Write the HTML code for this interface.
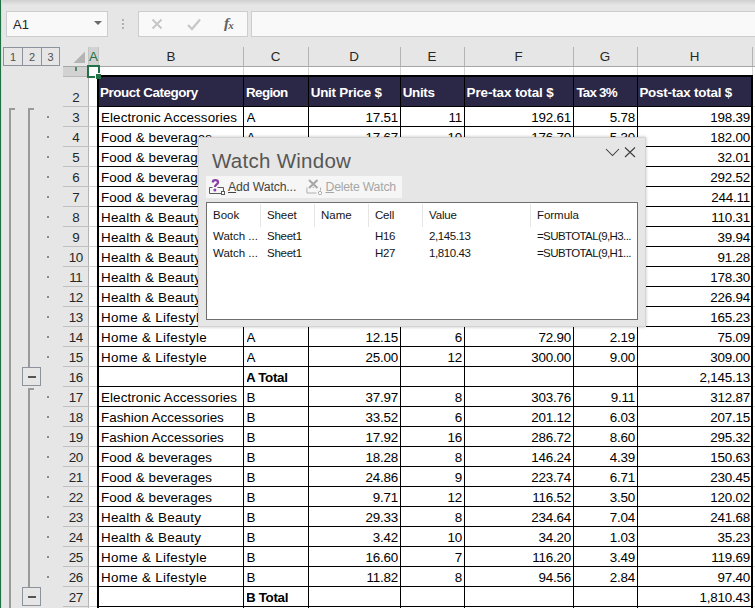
<!DOCTYPE html>
<html><head><meta charset="utf-8"><title>Watch Window</title>
<style>
*{box-sizing:border-box;margin:0;padding:0}
html,body{width:755px;height:608px;overflow:hidden;background:#e6e6e6;font-family:"Liberation Sans",sans-serif;}
body{position:relative}
.abs{position:absolute}
.t{position:absolute;white-space:nowrap;line-height:1}
.cell{position:absolute;white-space:nowrap;font-size:13.4px;line-height:20px;height:20px;color:#000;overflow:hidden;letter-spacing:0.05px;padding-top:1px}
.r{text-align:right;letter-spacing:-0.2px}
.hd{position:absolute;white-space:nowrap;font-size:13.4px;font-weight:bold;color:#fff;line-height:20px;letter-spacing:-0.4px}
.ch{position:absolute;top:47px;height:19px;line-height:19px;text-align:center;font-size:13.4px;color:#262626}
.rh{position:absolute;left:63px;width:25.5px;height:20px;line-height:20px;text-align:center;font-size:13.4px;color:#262626;letter-spacing:-0.5px;padding-top:1px}
.vl{position:absolute;background:#000;width:1px}
.hl{position:absolute;background:#000;height:1px}
.dot{position:absolute;left:47px;width:2px;height:2px;background:#8a8a8a}
.ww{font-size:12px;color:#151515;position:absolute;white-space:nowrap;line-height:14px}
</style></head><body>

<div class="abs" style="left:0;top:0;width:755px;height:5px;background:linear-gradient(#cfcfcf,#e6e6e6)"></div>
<div class="abs" style="left:6px;top:11px;width:102px;height:26px;background:#f9f9f9;border:1px solid #cdcdcd"></div>
<div class="t" style="left:13px;top:17.5px;font-size:13px;color:#262626">A1</div>
<div class="abs" style="left:94px;top:21px;width:0;height:0;border-left:4px solid transparent;border-right:4px solid transparent;border-top:4.5px solid #6a6a6a"></div>
<div class="abs" style="left:122px;top:19px;width:2px;height:2px;background:#b0b0b0"></div>
<div class="abs" style="left:122px;top:23px;width:2px;height:2px;background:#b0b0b0"></div>
<div class="abs" style="left:122px;top:27px;width:2px;height:2px;background:#b0b0b0"></div>
<div class="abs" style="left:138px;top:11px;width:110px;height:26px;background:#f9f9f9;border:1px solid #cdcdcd"></div>
<svg class="abs" style="left:150px;top:17px" width="14" height="14" viewBox="0 0 14 14"><path d="M2.5 2.5 L11.5 11.5 M11.5 2.5 L2.5 11.5" stroke="#c6c6c6" stroke-width="1.9" fill="none"/></svg>
<svg class="abs" style="left:186px;top:17px" width="16" height="14" viewBox="0 0 16 14"><path d="M2 8 L6 12 L14 2.5" stroke="#c8c8c8" stroke-width="2.3" fill="none"/></svg>
<div class="t" style="left:224px;top:15px;font-family:'Liberation Serif',serif;font-style:italic;font-weight:bold;font-size:15.5px;color:#606060">f<b style="font-size:11px;margin-left:-1px;position:relative;top:1px">x</b></div>
<div class="abs" style="left:251px;top:11px;width:510px;height:26px;background:#f9f9f9;border:1px solid #cdcdcd"></div>
<div class="abs" style="left:3px;top:47px;width:20px;height:19px;border:1px solid #8d939c;background:#e6e6e6;font-size:11px;line-height:18.5px;text-align:center;color:#505050">1</div>
<div class="abs" style="left:22px;top:47px;width:20px;height:19px;border:1px solid #8d939c;background:#e6e6e6;font-size:11px;line-height:18.5px;text-align:center;color:#505050">2</div>
<div class="abs" style="left:41px;top:47px;width:19px;height:19px;border:1px solid #8d939c;background:#e6e6e6;font-size:11px;line-height:18.5px;text-align:center;color:#505050">3</div>
<svg class="abs" style="left:73px;top:51px" width="12" height="12" viewBox="0 0 12 12"><path d="M12 0.5 L12 12 L0.5 12 Z" fill="#b4b4b4"/></svg>
<div class="abs" style="left:89px;top:67px;width:666px;height:541px;background:#fff"></div>
<div class="abs" style="left:88px;top:47px;width:11px;height:19px;background:#d2d2d2;border-left:1px solid #c4c4c4;border-right:1px solid #c4c4c4"></div>
<div class="ch" style="left:86px;width:15px;color:#217346">A</div>
<div class="ch" style="left:99px;width:144px">B</div>
<div class="ch" style="left:243px;width:65px">C</div>
<div class="ch" style="left:308px;width:92px">D</div>
<div class="ch" style="left:400px;width:64px">E</div>
<div class="ch" style="left:464px;width:109px">F</div>
<div class="ch" style="left:573px;width:64px">G</div>
<div class="ch" style="left:637px;width:115px">H</div>
<div class="abs" style="left:243px;top:47px;width:1px;height:19px;background:#b4b4b4"></div>
<div class="abs" style="left:308px;top:47px;width:1px;height:19px;background:#b4b4b4"></div>
<div class="abs" style="left:400px;top:47px;width:1px;height:19px;background:#b4b4b4"></div>
<div class="abs" style="left:464px;top:47px;width:1px;height:19px;background:#b4b4b4"></div>
<div class="abs" style="left:573px;top:47px;width:1px;height:19px;background:#b4b4b4"></div>
<div class="abs" style="left:637px;top:47px;width:1px;height:19px;background:#b4b4b4"></div>
<div class="abs" style="left:752px;top:47px;width:1px;height:19px;background:#b4b4b4"></div>
<div class="abs" style="left:63px;top:66px;width:692px;height:1px;background:#a6a6a6"></div>
<div class="abs" style="left:99px;top:67px;width:1px;height:8px;background:#d4d4d4"></div>
<div class="abs" style="left:243px;top:67px;width:1px;height:8px;background:#d4d4d4"></div>
<div class="abs" style="left:308px;top:67px;width:1px;height:8px;background:#d4d4d4"></div>
<div class="abs" style="left:400px;top:67px;width:1px;height:8px;background:#d4d4d4"></div>
<div class="abs" style="left:464px;top:67px;width:1px;height:8px;background:#d4d4d4"></div>
<div class="abs" style="left:573px;top:67px;width:1px;height:8px;background:#d4d4d4"></div>
<div class="abs" style="left:637px;top:67px;width:1px;height:8px;background:#d4d4d4"></div>
<div class="abs" style="left:752px;top:67px;width:1px;height:8px;background:#d4d4d4"></div>
<div class="abs" style="left:63px;top:67px;width:25px;height:10px;background:#d2d2d2"></div><div class="abs" style="left:75px;top:67px;width:2px;height:4px;background:#4f8a68"></div>
<div class="abs" style="left:88px;top:66px;width:1px;height:542px;background:#b4b4b4"></div>
<div class="rh" style="top:87px">2</div>
<div class="abs" style="left:63px;top:76px;width:26px;height:1px;background:#b8b8b8"></div>
<div class="abs" style="left:63px;top:106px;width:26px;height:1px;background:#c0c0c0"></div>
<div class="abs" style="left:97px;top:75px;width:656px;height:32px;background:#000"></div>
<div class="abs" style="left:99px;top:77px;width:652px;height:29px;background:#2b2747"></div>
<div class="hd" style="left:100px;top:83px;letter-spacing:-0.42px">Prouct Category</div>
<div class="hd" style="left:246px;top:83px;letter-spacing:-0.62px">Region</div>
<div class="hd" style="left:310.7px;top:83px;letter-spacing:-0.22px">Unit Price $</div>
<div class="hd" style="left:402.7px;top:83px;letter-spacing:-0.3px">Units</div>
<div class="hd" style="left:466.6px;top:83px;letter-spacing:-0.1px">Pre-tax total $</div>
<div class="hd" style="left:576.4px;top:83px;letter-spacing:-0.78px">Tax 3%</div>
<div class="hd" style="left:639.4px;top:83px;letter-spacing:-0.22px">Post-tax total $</div>
<div class="vl" style="left:243px;top:77px;height:30px"></div>
<div class="vl" style="left:308px;top:77px;height:30px"></div>
<div class="vl" style="left:400px;top:77px;height:30px"></div>
<div class="vl" style="left:464px;top:77px;height:30px"></div>
<div class="vl" style="left:573px;top:77px;height:30px"></div>
<div class="vl" style="left:637px;top:77px;height:30px"></div>
<div class="rh" style="top:107px">3</div>
<div class="abs" style="left:63px;top:126px;width:26px;height:1px;background:#c0c0c0"></div>
<div class="cell" style="left:101px;top:107px;width:140.5px;letter-spacing:0.1px">Electronic Accessories</div>
<div class="cell" style="left:246.5px;top:107px;width:61.5px;letter-spacing:0.05px">A</div>
<div class="cell r" style="left:309px;top:107px;width:89px">17.51</div>
<div class="cell r" style="left:401px;top:107px;width:61px">11</div>
<div class="cell r" style="left:465px;top:107px;width:106px">192.61</div>
<div class="cell r" style="left:574px;top:107px;width:61px">5.78</div>
<div class="cell r" style="left:638px;top:107px;width:112px">198.39</div>
<div class="hl" style="left:98px;top:126px;width:655px"></div>
<div class="dot" style="top:116px"></div>
<div class="rh" style="top:127px">4</div>
<div class="abs" style="left:63px;top:146px;width:26px;height:1px;background:#c0c0c0"></div>
<div class="cell" style="left:101px;top:127px;width:140.5px;letter-spacing:0.1px">Food & beverages</div>
<div class="cell" style="left:246.5px;top:127px;width:61.5px;letter-spacing:0.05px">A</div>
<div class="cell r" style="left:309px;top:127px;width:89px">17.67</div>
<div class="cell r" style="left:401px;top:127px;width:61px">10</div>
<div class="cell r" style="left:465px;top:127px;width:106px">176.70</div>
<div class="cell r" style="left:574px;top:127px;width:61px">5.30</div>
<div class="cell r" style="left:638px;top:127px;width:112px">182.00</div>
<div class="hl" style="left:98px;top:146px;width:655px"></div>
<div class="dot" style="top:136px"></div>
<div class="rh" style="top:147px">5</div>
<div class="abs" style="left:63px;top:166px;width:26px;height:1px;background:#c0c0c0"></div>
<div class="cell" style="left:101px;top:147px;width:140.5px;letter-spacing:0.1px">Food & beverages</div>
<div class="cell" style="left:246.5px;top:147px;width:61.5px;letter-spacing:0.05px">A</div>
<div class="cell r" style="left:638px;top:147px;width:112px">32.01</div>
<div class="hl" style="left:98px;top:166px;width:655px"></div>
<div class="dot" style="top:156px"></div>
<div class="rh" style="top:167px">6</div>
<div class="abs" style="left:63px;top:186px;width:26px;height:1px;background:#c0c0c0"></div>
<div class="cell" style="left:101px;top:167px;width:140.5px;letter-spacing:0.1px">Food & beverages</div>
<div class="cell" style="left:246.5px;top:167px;width:61.5px;letter-spacing:0.05px">A</div>
<div class="cell r" style="left:638px;top:167px;width:112px">292.52</div>
<div class="hl" style="left:98px;top:186px;width:655px"></div>
<div class="dot" style="top:176px"></div>
<div class="rh" style="top:187px">7</div>
<div class="abs" style="left:63px;top:206px;width:26px;height:1px;background:#c0c0c0"></div>
<div class="cell" style="left:101px;top:187px;width:140.5px;letter-spacing:0.1px">Food & beverages</div>
<div class="cell" style="left:246.5px;top:187px;width:61.5px;letter-spacing:0.05px">A</div>
<div class="cell r" style="left:638px;top:187px;width:112px">244.11</div>
<div class="hl" style="left:98px;top:206px;width:655px"></div>
<div class="dot" style="top:196px"></div>
<div class="rh" style="top:207px">8</div>
<div class="abs" style="left:63px;top:226px;width:26px;height:1px;background:#c0c0c0"></div>
<div class="cell" style="left:101px;top:207px;width:140.5px;letter-spacing:0.22px">Health & Beauty</div>
<div class="cell" style="left:246.5px;top:207px;width:61.5px;letter-spacing:0.05px">A</div>
<div class="cell r" style="left:638px;top:207px;width:112px">110.31</div>
<div class="hl" style="left:98px;top:226px;width:655px"></div>
<div class="dot" style="top:216px"></div>
<div class="rh" style="top:227px">9</div>
<div class="abs" style="left:63px;top:246px;width:26px;height:1px;background:#c0c0c0"></div>
<div class="cell" style="left:101px;top:227px;width:140.5px;letter-spacing:0.22px">Health & Beauty</div>
<div class="cell" style="left:246.5px;top:227px;width:61.5px;letter-spacing:0.05px">A</div>
<div class="cell r" style="left:638px;top:227px;width:112px">39.94</div>
<div class="hl" style="left:98px;top:246px;width:655px"></div>
<div class="dot" style="top:236px"></div>
<div class="rh" style="top:247px">10</div>
<div class="abs" style="left:63px;top:266px;width:26px;height:1px;background:#c0c0c0"></div>
<div class="cell" style="left:101px;top:247px;width:140.5px;letter-spacing:0.22px">Health & Beauty</div>
<div class="cell" style="left:246.5px;top:247px;width:61.5px;letter-spacing:0.05px">A</div>
<div class="cell r" style="left:638px;top:247px;width:112px">91.28</div>
<div class="hl" style="left:98px;top:266px;width:655px"></div>
<div class="dot" style="top:256px"></div>
<div class="rh" style="top:267px">11</div>
<div class="abs" style="left:63px;top:286px;width:26px;height:1px;background:#c0c0c0"></div>
<div class="cell" style="left:101px;top:267px;width:140.5px;letter-spacing:0.22px">Health & Beauty</div>
<div class="cell" style="left:246.5px;top:267px;width:61.5px;letter-spacing:0.05px">A</div>
<div class="cell r" style="left:638px;top:267px;width:112px">178.30</div>
<div class="hl" style="left:98px;top:286px;width:655px"></div>
<div class="dot" style="top:276px"></div>
<div class="rh" style="top:287px">12</div>
<div class="abs" style="left:63px;top:306px;width:26px;height:1px;background:#c0c0c0"></div>
<div class="cell" style="left:101px;top:287px;width:140.5px;letter-spacing:0.22px">Health & Beauty</div>
<div class="cell" style="left:246.5px;top:287px;width:61.5px;letter-spacing:0.05px">A</div>
<div class="cell r" style="left:638px;top:287px;width:112px">226.94</div>
<div class="hl" style="left:98px;top:306px;width:655px"></div>
<div class="dot" style="top:296px"></div>
<div class="rh" style="top:307px">13</div>
<div class="abs" style="left:63px;top:326px;width:26px;height:1px;background:#c0c0c0"></div>
<div class="cell" style="left:101px;top:307px;width:140.5px;letter-spacing:0.3px">Home & Lifestyle</div>
<div class="cell" style="left:246.5px;top:307px;width:61.5px;letter-spacing:0.05px">A</div>
<div class="cell r" style="left:638px;top:307px;width:112px">165.23</div>
<div class="hl" style="left:98px;top:326px;width:655px"></div>
<div class="dot" style="top:316px"></div>
<div class="rh" style="top:327px">14</div>
<div class="abs" style="left:63px;top:346px;width:26px;height:1px;background:#c0c0c0"></div>
<div class="cell" style="left:101px;top:327px;width:140.5px;letter-spacing:0.3px">Home & Lifestyle</div>
<div class="cell" style="left:246.5px;top:327px;width:61.5px;letter-spacing:0.05px">A</div>
<div class="cell r" style="left:309px;top:327px;width:89px">12.15</div>
<div class="cell r" style="left:401px;top:327px;width:61px">6</div>
<div class="cell r" style="left:465px;top:327px;width:106px">72.90</div>
<div class="cell r" style="left:574px;top:327px;width:61px">2.19</div>
<div class="cell r" style="left:638px;top:327px;width:112px">75.09</div>
<div class="hl" style="left:98px;top:346px;width:655px"></div>
<div class="dot" style="top:336px"></div>
<div class="rh" style="top:347px">15</div>
<div class="abs" style="left:63px;top:366px;width:26px;height:1px;background:#c0c0c0"></div>
<div class="cell" style="left:101px;top:347px;width:140.5px;letter-spacing:0.3px">Home & Lifestyle</div>
<div class="cell" style="left:246.5px;top:347px;width:61.5px;letter-spacing:0.05px">A</div>
<div class="cell r" style="left:309px;top:347px;width:89px">25.00</div>
<div class="cell r" style="left:401px;top:347px;width:61px">12</div>
<div class="cell r" style="left:465px;top:347px;width:106px">300.00</div>
<div class="cell r" style="left:574px;top:347px;width:61px">9.00</div>
<div class="cell r" style="left:638px;top:347px;width:112px">309.00</div>
<div class="hl" style="left:98px;top:366px;width:655px"></div>
<div class="dot" style="top:356px"></div>
<div class="rh" style="top:367px">16</div>
<div class="abs" style="left:63px;top:386px;width:26px;height:1px;background:#c0c0c0"></div>
<div class="cell" style="left:246.5px;top:367px;width:61.5px;letter-spacing:0.05px"><b style="letter-spacing:-0.3px;margin-left:-0.6px">A Total</b></div>
<div class="cell r" style="left:638px;top:367px;width:112px">2,145.13</div>
<div class="hl" style="left:98px;top:386px;width:655px"></div>
<div class="rh" style="top:387px">17</div>
<div class="abs" style="left:63px;top:406px;width:26px;height:1px;background:#c0c0c0"></div>
<div class="cell" style="left:101px;top:387px;width:140.5px;letter-spacing:0.1px">Electronic Accessories</div>
<div class="cell" style="left:246.5px;top:387px;width:61.5px;letter-spacing:0.05px">B</div>
<div class="cell r" style="left:309px;top:387px;width:89px">37.97</div>
<div class="cell r" style="left:401px;top:387px;width:61px">8</div>
<div class="cell r" style="left:465px;top:387px;width:106px">303.76</div>
<div class="cell r" style="left:574px;top:387px;width:61px">9.11</div>
<div class="cell r" style="left:638px;top:387px;width:112px">312.87</div>
<div class="hl" style="left:98px;top:406px;width:655px"></div>
<div class="dot" style="top:396px"></div>
<div class="rh" style="top:407px">18</div>
<div class="abs" style="left:63px;top:426px;width:26px;height:1px;background:#c0c0c0"></div>
<div class="cell" style="left:101px;top:407px;width:140.5px;letter-spacing:0.0px">Fashion Accessories</div>
<div class="cell" style="left:246.5px;top:407px;width:61.5px;letter-spacing:0.05px">B</div>
<div class="cell r" style="left:309px;top:407px;width:89px">33.52</div>
<div class="cell r" style="left:401px;top:407px;width:61px">6</div>
<div class="cell r" style="left:465px;top:407px;width:106px">201.12</div>
<div class="cell r" style="left:574px;top:407px;width:61px">6.03</div>
<div class="cell r" style="left:638px;top:407px;width:112px">207.15</div>
<div class="hl" style="left:98px;top:426px;width:655px"></div>
<div class="dot" style="top:416px"></div>
<div class="rh" style="top:427px">19</div>
<div class="abs" style="left:63px;top:446px;width:26px;height:1px;background:#c0c0c0"></div>
<div class="cell" style="left:101px;top:427px;width:140.5px;letter-spacing:0.0px">Fashion Accessories</div>
<div class="cell" style="left:246.5px;top:427px;width:61.5px;letter-spacing:0.05px">B</div>
<div class="cell r" style="left:309px;top:427px;width:89px">17.92</div>
<div class="cell r" style="left:401px;top:427px;width:61px">16</div>
<div class="cell r" style="left:465px;top:427px;width:106px">286.72</div>
<div class="cell r" style="left:574px;top:427px;width:61px">8.60</div>
<div class="cell r" style="left:638px;top:427px;width:112px">295.32</div>
<div class="hl" style="left:98px;top:446px;width:655px"></div>
<div class="dot" style="top:436px"></div>
<div class="rh" style="top:447px">20</div>
<div class="abs" style="left:63px;top:466px;width:26px;height:1px;background:#c0c0c0"></div>
<div class="cell" style="left:101px;top:447px;width:140.5px;letter-spacing:0.1px">Food & beverages</div>
<div class="cell" style="left:246.5px;top:447px;width:61.5px;letter-spacing:0.05px">B</div>
<div class="cell r" style="left:309px;top:447px;width:89px">18.28</div>
<div class="cell r" style="left:401px;top:447px;width:61px">8</div>
<div class="cell r" style="left:465px;top:447px;width:106px">146.24</div>
<div class="cell r" style="left:574px;top:447px;width:61px">4.39</div>
<div class="cell r" style="left:638px;top:447px;width:112px">150.63</div>
<div class="hl" style="left:98px;top:466px;width:655px"></div>
<div class="dot" style="top:456px"></div>
<div class="rh" style="top:467px">21</div>
<div class="abs" style="left:63px;top:486px;width:26px;height:1px;background:#c0c0c0"></div>
<div class="cell" style="left:101px;top:467px;width:140.5px;letter-spacing:0.1px">Food & beverages</div>
<div class="cell" style="left:246.5px;top:467px;width:61.5px;letter-spacing:0.05px">B</div>
<div class="cell r" style="left:309px;top:467px;width:89px">24.86</div>
<div class="cell r" style="left:401px;top:467px;width:61px">9</div>
<div class="cell r" style="left:465px;top:467px;width:106px">223.74</div>
<div class="cell r" style="left:574px;top:467px;width:61px">6.71</div>
<div class="cell r" style="left:638px;top:467px;width:112px">230.45</div>
<div class="hl" style="left:98px;top:486px;width:655px"></div>
<div class="dot" style="top:476px"></div>
<div class="rh" style="top:487px">22</div>
<div class="abs" style="left:63px;top:506px;width:26px;height:1px;background:#c0c0c0"></div>
<div class="cell" style="left:101px;top:487px;width:140.5px;letter-spacing:0.1px">Food & beverages</div>
<div class="cell" style="left:246.5px;top:487px;width:61.5px;letter-spacing:0.05px">B</div>
<div class="cell r" style="left:309px;top:487px;width:89px">9.71</div>
<div class="cell r" style="left:401px;top:487px;width:61px">12</div>
<div class="cell r" style="left:465px;top:487px;width:106px">116.52</div>
<div class="cell r" style="left:574px;top:487px;width:61px">3.50</div>
<div class="cell r" style="left:638px;top:487px;width:112px">120.02</div>
<div class="hl" style="left:98px;top:506px;width:655px"></div>
<div class="dot" style="top:496px"></div>
<div class="rh" style="top:507px">23</div>
<div class="abs" style="left:63px;top:526px;width:26px;height:1px;background:#c0c0c0"></div>
<div class="cell" style="left:101px;top:507px;width:140.5px;letter-spacing:0.22px">Health & Beauty</div>
<div class="cell" style="left:246.5px;top:507px;width:61.5px;letter-spacing:0.05px">B</div>
<div class="cell r" style="left:309px;top:507px;width:89px">29.33</div>
<div class="cell r" style="left:401px;top:507px;width:61px">8</div>
<div class="cell r" style="left:465px;top:507px;width:106px">234.64</div>
<div class="cell r" style="left:574px;top:507px;width:61px">7.04</div>
<div class="cell r" style="left:638px;top:507px;width:112px">241.68</div>
<div class="hl" style="left:98px;top:526px;width:655px"></div>
<div class="dot" style="top:516px"></div>
<div class="rh" style="top:527px">24</div>
<div class="abs" style="left:63px;top:546px;width:26px;height:1px;background:#c0c0c0"></div>
<div class="cell" style="left:101px;top:527px;width:140.5px;letter-spacing:0.22px">Health & Beauty</div>
<div class="cell" style="left:246.5px;top:527px;width:61.5px;letter-spacing:0.05px">B</div>
<div class="cell r" style="left:309px;top:527px;width:89px">3.42</div>
<div class="cell r" style="left:401px;top:527px;width:61px">10</div>
<div class="cell r" style="left:465px;top:527px;width:106px">34.20</div>
<div class="cell r" style="left:574px;top:527px;width:61px">1.03</div>
<div class="cell r" style="left:638px;top:527px;width:112px">35.23</div>
<div class="hl" style="left:98px;top:546px;width:655px"></div>
<div class="dot" style="top:536px"></div>
<div class="rh" style="top:547px">25</div>
<div class="abs" style="left:63px;top:566px;width:26px;height:1px;background:#c0c0c0"></div>
<div class="cell" style="left:101px;top:547px;width:140.5px;letter-spacing:0.3px">Home & Lifestyle</div>
<div class="cell" style="left:246.5px;top:547px;width:61.5px;letter-spacing:0.05px">B</div>
<div class="cell r" style="left:309px;top:547px;width:89px">16.60</div>
<div class="cell r" style="left:401px;top:547px;width:61px">7</div>
<div class="cell r" style="left:465px;top:547px;width:106px">116.20</div>
<div class="cell r" style="left:574px;top:547px;width:61px">3.49</div>
<div class="cell r" style="left:638px;top:547px;width:112px">119.69</div>
<div class="hl" style="left:98px;top:566px;width:655px"></div>
<div class="dot" style="top:556px"></div>
<div class="rh" style="top:567px">26</div>
<div class="abs" style="left:63px;top:586px;width:26px;height:1px;background:#c0c0c0"></div>
<div class="cell" style="left:101px;top:567px;width:140.5px;letter-spacing:0.3px">Home & Lifestyle</div>
<div class="cell" style="left:246.5px;top:567px;width:61.5px;letter-spacing:0.05px">B</div>
<div class="cell r" style="left:309px;top:567px;width:89px">11.82</div>
<div class="cell r" style="left:401px;top:567px;width:61px">8</div>
<div class="cell r" style="left:465px;top:567px;width:106px">94.56</div>
<div class="cell r" style="left:574px;top:567px;width:61px">2.84</div>
<div class="cell r" style="left:638px;top:567px;width:112px">97.40</div>
<div class="hl" style="left:98px;top:586px;width:655px"></div>
<div class="dot" style="top:576px"></div>
<div class="rh" style="top:587px">27</div>
<div class="abs" style="left:63px;top:606px;width:26px;height:1px;background:#c0c0c0"></div>
<div class="cell" style="left:246.5px;top:587px;width:61.5px;letter-spacing:0.05px"><b style="letter-spacing:-0.3px;margin-left:-0.6px">B Total</b></div>
<div class="cell r" style="left:638px;top:587px;width:112px">1,810.43</div>
<div class="hl" style="left:98px;top:606px;width:655px"></div>
<div class="abs" style="left:753px;top:106px;width:2px;height:1px;background:#d9d9d9"></div>
<div class="abs" style="left:753px;top:126px;width:2px;height:1px;background:#d9d9d9"></div>
<div class="abs" style="left:753px;top:146px;width:2px;height:1px;background:#d9d9d9"></div>
<div class="abs" style="left:753px;top:166px;width:2px;height:1px;background:#d9d9d9"></div>
<div class="abs" style="left:753px;top:186px;width:2px;height:1px;background:#d9d9d9"></div>
<div class="abs" style="left:753px;top:206px;width:2px;height:1px;background:#d9d9d9"></div>
<div class="abs" style="left:753px;top:226px;width:2px;height:1px;background:#d9d9d9"></div>
<div class="abs" style="left:753px;top:246px;width:2px;height:1px;background:#d9d9d9"></div>
<div class="abs" style="left:753px;top:266px;width:2px;height:1px;background:#d9d9d9"></div>
<div class="abs" style="left:753px;top:286px;width:2px;height:1px;background:#d9d9d9"></div>
<div class="abs" style="left:753px;top:306px;width:2px;height:1px;background:#d9d9d9"></div>
<div class="abs" style="left:753px;top:326px;width:2px;height:1px;background:#d9d9d9"></div>
<div class="abs" style="left:753px;top:346px;width:2px;height:1px;background:#d9d9d9"></div>
<div class="abs" style="left:753px;top:366px;width:2px;height:1px;background:#d9d9d9"></div>
<div class="abs" style="left:753px;top:386px;width:2px;height:1px;background:#d9d9d9"></div>
<div class="abs" style="left:753px;top:406px;width:2px;height:1px;background:#d9d9d9"></div>
<div class="abs" style="left:753px;top:426px;width:2px;height:1px;background:#d9d9d9"></div>
<div class="abs" style="left:753px;top:446px;width:2px;height:1px;background:#d9d9d9"></div>
<div class="abs" style="left:753px;top:466px;width:2px;height:1px;background:#d9d9d9"></div>
<div class="abs" style="left:753px;top:486px;width:2px;height:1px;background:#d9d9d9"></div>
<div class="abs" style="left:753px;top:506px;width:2px;height:1px;background:#d9d9d9"></div>
<div class="abs" style="left:753px;top:526px;width:2px;height:1px;background:#d9d9d9"></div>
<div class="abs" style="left:753px;top:546px;width:2px;height:1px;background:#d9d9d9"></div>
<div class="abs" style="left:753px;top:566px;width:2px;height:1px;background:#d9d9d9"></div>
<div class="abs" style="left:753px;top:586px;width:2px;height:1px;background:#d9d9d9"></div>
<div class="abs" style="left:753px;top:606px;width:2px;height:1px;background:#d9d9d9"></div>
<div class="abs" style="left:89px;top:106px;width:8px;height:1px;background:#d4d4d4"></div>
<div class="abs" style="left:89px;top:126px;width:8px;height:1px;background:#d4d4d4"></div>
<div class="abs" style="left:89px;top:146px;width:8px;height:1px;background:#d4d4d4"></div>
<div class="abs" style="left:89px;top:166px;width:8px;height:1px;background:#d4d4d4"></div>
<div class="abs" style="left:89px;top:186px;width:8px;height:1px;background:#d4d4d4"></div>
<div class="abs" style="left:89px;top:206px;width:8px;height:1px;background:#d4d4d4"></div>
<div class="abs" style="left:89px;top:226px;width:8px;height:1px;background:#d4d4d4"></div>
<div class="abs" style="left:89px;top:246px;width:8px;height:1px;background:#d4d4d4"></div>
<div class="abs" style="left:89px;top:266px;width:8px;height:1px;background:#d4d4d4"></div>
<div class="abs" style="left:89px;top:286px;width:8px;height:1px;background:#d4d4d4"></div>
<div class="abs" style="left:89px;top:306px;width:8px;height:1px;background:#d4d4d4"></div>
<div class="abs" style="left:89px;top:326px;width:8px;height:1px;background:#d4d4d4"></div>
<div class="abs" style="left:89px;top:346px;width:8px;height:1px;background:#d4d4d4"></div>
<div class="abs" style="left:89px;top:366px;width:8px;height:1px;background:#d4d4d4"></div>
<div class="abs" style="left:89px;top:386px;width:8px;height:1px;background:#d4d4d4"></div>
<div class="abs" style="left:89px;top:406px;width:8px;height:1px;background:#d4d4d4"></div>
<div class="abs" style="left:89px;top:426px;width:8px;height:1px;background:#d4d4d4"></div>
<div class="abs" style="left:89px;top:446px;width:8px;height:1px;background:#d4d4d4"></div>
<div class="abs" style="left:89px;top:466px;width:8px;height:1px;background:#d4d4d4"></div>
<div class="abs" style="left:89px;top:486px;width:8px;height:1px;background:#d4d4d4"></div>
<div class="abs" style="left:89px;top:506px;width:8px;height:1px;background:#d4d4d4"></div>
<div class="abs" style="left:89px;top:526px;width:8px;height:1px;background:#d4d4d4"></div>
<div class="abs" style="left:89px;top:546px;width:8px;height:1px;background:#d4d4d4"></div>
<div class="abs" style="left:89px;top:566px;width:8px;height:1px;background:#d4d4d4"></div>
<div class="abs" style="left:89px;top:586px;width:8px;height:1px;background:#d4d4d4"></div>
<div class="abs" style="left:89px;top:606px;width:8px;height:1px;background:#d4d4d4"></div>
<div class="abs" style="left:89px;top:76px;width:8px;height:1px;background:#d4d4d4"></div>
<div class="vl" style="left:97px;top:107px;width:2px;height:501px"></div>
<div class="vl" style="left:751px;top:107px;width:2px;height:501px"></div>
<div class="vl" style="left:243px;top:107px;height:501px"></div>
<div class="vl" style="left:308px;top:107px;height:501px"></div>
<div class="vl" style="left:400px;top:107px;height:501px"></div>
<div class="vl" style="left:464px;top:107px;height:501px"></div>
<div class="vl" style="left:573px;top:107px;height:501px"></div>
<div class="vl" style="left:637px;top:107px;height:501px"></div>
<div class="abs" style="left:87px;top:65px;width:13px;height:13px;border:2px solid #217346;background:#fff"></div>
<div class="abs" style="left:95px;top:73px;width:6px;height:6px;background:#217346;border-left:1px solid #fff;border-top:1px solid #fff"></div>
<div class="abs" style="left:9px;top:108px;width:2px;height:500px;background:#9a9a9a"></div>
<div class="abs" style="left:9px;top:108px;width:6px;height:2px;background:#9a9a9a"></div>
<div class="abs" style="left:28px;top:108px;width:2px;height:260px;background:#9a9a9a"></div>
<div class="abs" style="left:28px;top:108px;width:6px;height:2px;background:#9a9a9a"></div>
<div class="abs" style="left:28px;top:388px;width:2px;height:200px;background:#9a9a9a"></div>
<div class="abs" style="left:28px;top:388px;width:6px;height:2px;background:#9a9a9a"></div>
<div class="abs" style="left:22px;top:367px;width:19px;height:19px;border:1px solid #8d939c;background:#e6e6e6"></div>
<div class="abs" style="left:28px;top:376px;width:8px;height:2px;background:#555"></div>
<div class="abs" style="left:22px;top:587px;width:19px;height:19px;border:1px solid #8d939c;background:#e6e6e6"></div>
<div class="abs" style="left:28px;top:596px;width:8px;height:2px;background:#555"></div>
<div class="abs" style="left:0;top:0;width:2px;height:608px;background:linear-gradient(90deg,#1e7145 0,#1e7145 1px,#d3dfd8 1px,#d3dfd8 2px)"></div>
<div class="abs" style="left:198px;top:137px;width:448px;height:190px;background:#e6e6e6;border:1px solid #d4d4d4;box-shadow:0 0 3px rgba(0,0,0,.25)"></div>
<div class="t" style="left:212px;top:151px;font-size:20.5px;color:#565656;letter-spacing:0.27px">Watch Window</div>
<svg class="abs" style="left:604px;top:146px" width="34" height="13" viewBox="0 0 34 13"><path d="M2 3 L8.5 9.5 L15 3" stroke="#3a3a3a" stroke-width="1.05" fill="none"/><path d="M21 1.5 L31 11 M31 1.5 L21 11" stroke="#3a3a3a" stroke-width="1.05" fill="none"/></svg>
<div class="abs" style="left:206px;top:176px;width:196px;height:22px;background:#f6f6f6"></div>
<div class="ww" style="left:228px;top:180px;color:#444;font-size:12.3px;letter-spacing:-0.15px"><u>A</u>dd Watch...</div>
<div class="ww" style="left:325.5px;top:180px;color:#a6a6a6;font-size:12.3px;letter-spacing:-0.25px"><u>D</u>elete Watch</div>
<svg class="abs" style="left:208px;top:178px" width="18" height="18" viewBox="0 0 18 18"><path d="M4.5 9.5 H1.5 V15.5 H13 M15.5 13 V9.5 H9.5" stroke="#5a5a5a" stroke-width="1" fill="none"/><rect x="13.5" y="13.5" width="3" height="3" fill="#fff" stroke="#5a5a5a" stroke-width="1"/><path d="M4.8 4.4 C4.8 2.8 5.9 2.2 7.3 2.2 C8.9 2.2 10 3 10 4.4 C10 6.4 6.9 6.4 6.9 9" stroke="#8a3fa8" stroke-width="2.2" fill="none"/><circle cx="6.9" cy="12" r="1.5" fill="#8a3fa8"/></svg>
<svg class="abs" style="left:305px;top:178px" width="18" height="18" viewBox="0 0 18 18"><path d="M1.9 9.5 V15 H11.5 M15.5 9.5 V12.5" stroke="#b0b0b0" stroke-width="1" fill="none"/><path d="M4 2 L12.5 10 M12.5 2 L4 10" stroke="#a6a6a6" stroke-width="2" fill="none"/><path d="M7.6 9.4 H9" stroke="#b0b0b0" stroke-width="1" fill="none"/><circle cx="15" cy="15" r="1.7" fill="#fff" stroke="#b0b0b0" stroke-width="1"/></svg>
<div class="abs" style="left:206px;top:202px;width:432px;height:118px;background:#fff;border:1px solid #6e6e6e"></div>
<div class="ww" style="left:213px;top:208px;font-size:11.5px;letter-spacing:0px">Book</div>
<div class="ww" style="left:267px;top:208px;font-size:11.5px;letter-spacing:-0.1px">Sheet</div>
<div class="ww" style="left:321px;top:208px;font-size:11.5px;letter-spacing:0px">Name</div>
<div class="ww" style="left:375px;top:208px;font-size:11.5px;letter-spacing:-0.2px">Cell</div>
<div class="ww" style="left:429px;top:208px;font-size:11.5px;letter-spacing:-0.15px">Value</div>
<div class="ww" style="left:537px;top:208px;font-size:11.5px;letter-spacing:-0.05px">Formula</div>
<div class="abs" style="left:260px;top:204px;width:1px;height:23px;background:#e5e5e5"></div>
<div class="abs" style="left:314px;top:204px;width:1px;height:23px;background:#e5e5e5"></div>
<div class="abs" style="left:368px;top:204px;width:1px;height:23px;background:#e5e5e5"></div>
<div class="abs" style="left:422px;top:204px;width:1px;height:23px;background:#e5e5e5"></div>
<div class="abs" style="left:530px;top:204px;width:1px;height:23px;background:#e5e5e5"></div>
<div class="ww" style="left:213px;top:229px;font-size:11.5px;letter-spacing:0px">Watch ...</div>
<div class="ww" style="left:267px;top:229px;font-size:11.5px;letter-spacing:-0.25px">Sheet1</div>
<div class="ww" style="left:375px;top:229px;font-size:11.5px;letter-spacing:-0.35px">H16</div>
<div class="ww" style="left:429px;top:229px;font-size:11.5px;letter-spacing:-0.4px">2,145.13</div>
<div class="ww" style="left:537px;top:229px;font-size:11.5px;letter-spacing:-0.6px">=SUBTOTAL(9,H3...</div>
<div class="ww" style="left:213px;top:246px;font-size:11.5px;letter-spacing:0px">Watch ...</div>
<div class="ww" style="left:267px;top:246px;font-size:11.5px;letter-spacing:-0.25px">Sheet1</div>
<div class="ww" style="left:375px;top:246px;font-size:11.5px;letter-spacing:-0.35px">H27</div>
<div class="ww" style="left:429px;top:246px;font-size:11.5px;letter-spacing:-0.4px">1,810.43</div>
<div class="ww" style="left:537px;top:246px;font-size:11.5px;letter-spacing:-0.6px">=SUBTOTAL(9,H1...</div>
</body></html>
